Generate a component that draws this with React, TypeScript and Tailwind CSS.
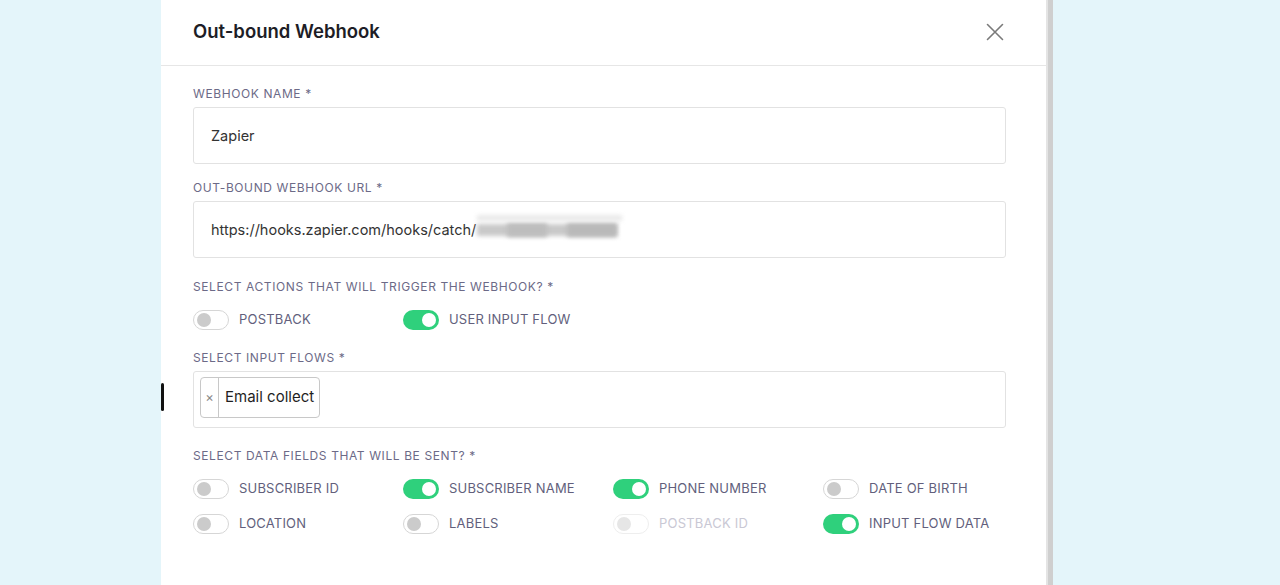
import React from "react";

const font = { fontFamily: "Inter, 'Noto Sans', sans-serif" };

function Toggle({ on, disabled }: { on?: boolean; disabled?: boolean }) {
  if (on) {
    return (
      <div className="relative h-5 w-9 shrink-0 rounded-full bg-[#2fd07c]">
        <div className="absolute right-[3px] top-[3px] h-[14px] w-[14px] rounded-full bg-white" />
      </div>
    );
  }
  return (
    <div
      className={
        "relative h-5 w-9 shrink-0 rounded-full border bg-white " +
        (disabled ? "border-[#eeeeee]" : "border-[#d6d6d6]")
      }
    >
      <div
        className={
          "absolute left-[3px] top-[2px] h-[14px] w-[14px] rounded-full " +
          (disabled ? "bg-[#e6e6e6]" : "bg-[#cbcbcb]")
        }
      />
    </div>
  );
}

function ToggleItem({ label, on, disabled }: { label: string; on?: boolean; disabled?: boolean }) {
  return (
    <div className="flex h-5 w-[210px] shrink-0 items-center gap-[10px]">
      <Toggle on={on} disabled={disabled} />
      <span
        className={
          "text-[13px] tracking-[0.2px] " + (disabled ? "text-[#c9c8d4]" : "text-[#625f7c]")
        }
      >
        {label}
      </span>
    </div>
  );
}

function Label({ children, className = "" }: { children: React.ReactNode; className?: string }) {
  return (
    <div className={"h-4 text-[12px] leading-4 tracking-[0.6px] text-[#6c6a87] " + className}>
      {children}
    </div>
  );
}

export default function App() {
  return (
    <div className="flex h-[585px] w-[1280px] overflow-hidden bg-[#e4f5fa] pl-[161px]" style={font}>
      <div className="relative h-full w-[885px] bg-white">
        <div className="absolute left-0 top-[383px] h-[28px] w-[3px] rounded-full bg-[#111]" />
        <div className="flex h-[66px] items-center justify-between border-b border-[#e6e6e6] pb-[2px] pl-8 pr-[42px]">
          <h1 className="text-[18.5px] font-semibold text-[#1d1d26]">Out-bound Webhook</h1>
          <svg width="18" height="18" viewBox="0 0 18 18" className="text-[#7a7a7a]">
            <path d="M1.5 1.5 L16.5 16.5 M16.5 1.5 L1.5 16.5" stroke="currentColor" strokeWidth="1.6" strokeLinecap="round" />
          </svg>
        </div>

        <div className="pl-8 pr-10">
          <Label className="mt-[20px]">WEBHOOK NAME *</Label>
          <div className="mt-[5px] flex h-[57px] items-center rounded-[3px] border border-[#e2e2e2] px-[17px] text-[14.5px] text-[#333]">
            Zapier
          </div>

          <Label className="mt-[16px]">OUT-BOUND WEBHOOK URL *</Label>
          <div className="mt-[5px] flex h-[57px] items-center rounded-[3px] border border-[#e2e2e2] px-[17px] text-[14.5px] text-[#333]">
            <span>https://hooks.zapier.com/hooks/catch/</span>
            <span className="relative ml-[1px] inline-flex h-[22px] w-[146px] items-center">
              <span className="absolute left-0 top-[5px] h-[12px] w-[140px] bg-[#c9c9c9] blur-[2px]" />
              <span className="absolute left-[30px] top-[4px] h-[14px] w-[40px] bg-[#bdbdbd] blur-[2px]" />
              <span className="absolute left-[90px] top-[4px] h-[14px] w-[50px] bg-[#b9b9b9] blur-[2px]" />
              <span className="absolute left-[0px] top-[-4px] h-[6px] w-[145px] bg-[#e9e9e9] blur-[2px]" />
            </span>
          </div>

          <Label className="mt-[21px]">SELECT ACTIONS THAT WILL TRIGGER THE WEBHOOK? *</Label>
          <div className="mt-[15px] flex">
            <ToggleItem label="POSTBACK" />
            <ToggleItem label="USER INPUT FLOW" on />
          </div>

          <Label className="mt-[20px]">SELECT INPUT FLOWS *</Label>
          <div className="mt-[5px] flex h-[57px] items-start rounded-[3px] border border-[#e2e2e2] px-[6px] pt-[5px]">
            <div className="flex h-[41px] items-stretch rounded-[4px] border border-[#c8c8c8] bg-white">
              <span className="flex w-[18px] items-center justify-center border-r border-[#c8c8c8] text-[13px] text-[#888]">
                ×
              </span>
              <span className="flex items-center pl-[6px] pr-[5px] text-[15px] text-[#1f1f1f]">Email collect</span>
            </div>
          </div>

          <Label className="mt-[20px]">SELECT DATA FIELDS THAT WILL BE SENT? *</Label>
          <div className="mt-[15px] flex">
            <ToggleItem label="SUBSCRIBER ID" />
            <ToggleItem label="SUBSCRIBER NAME" on />
            <ToggleItem label="PHONE NUMBER" on />
            <ToggleItem label="DATE OF BIRTH" />
          </div>
          <div className="mt-[15px] flex">
            <ToggleItem label="LOCATION" />
            <ToggleItem label="LABELS" />
            <ToggleItem label="POSTBACK ID" disabled />
            <ToggleItem label="INPUT FLOW DATA" on />
          </div>
        </div>
      </div>
      <div className="h-full w-[7px] border-l-2 border-[#e4e4e4] bg-[#cfcfcf]" />
    </div>
  );
}
